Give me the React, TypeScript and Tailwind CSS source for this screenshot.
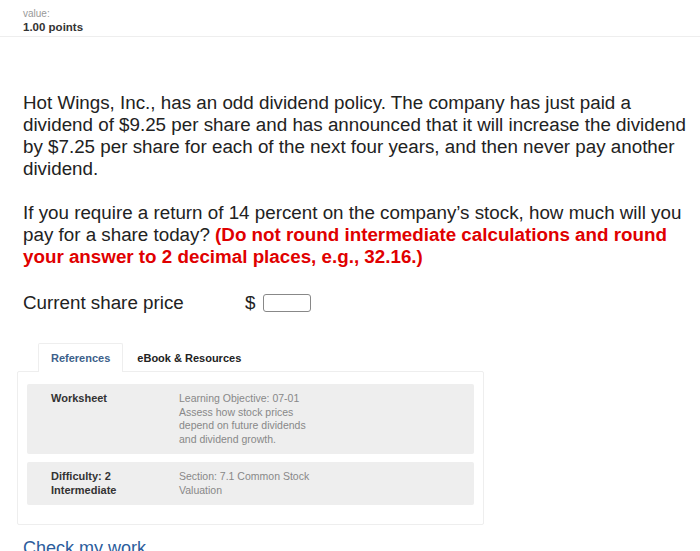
export default function App() {
  return (
    <div className="relative h-[551px] w-[700px] overflow-hidden bg-white text-[#222] [font-family:'Liberation_Sans',Arial,sans-serif]">
      <div className="border-b border-[#eeeeee] px-[23px] pb-[2px] pt-[8px]">
        <p className="text-[10px] leading-[12px] text-[#999]">value:</p>
        <p className="text-[11.5px] font-bold leading-[14px] text-[#333]">1.00 points</p>
      </div>

      <div className="pl-[23px] pr-[10px] pt-[55px] text-[18.8px] leading-[22px] text-[#222]">
        <p>
          Hot Wings, Inc., has an odd dividend policy. The company has just paid a dividend of $9.25 per share and has
          announced that it will increase the dividend by $7.25 per share for each of the next four years, and then never
          pay another dividend.
        </p>
        <p className="mt-[22px]">
          If you require a return of 14 percent on the company’s stock, how much will you pay for a share today?{" "}
          <span className="font-bold text-[#e00000]">
            (Do not round intermediate calculations and round your answer to 2 decimal places, e.g., 32.16.)
          </span>
        </p>
        <div className="mt-[24px] flex items-center">
          <span className="w-[222px]">Current share price</span>
          <span>$</span>
          <span className="ml-[8px] h-[18px] w-[48px] rounded-[3px] border border-[#888]" />
        </div>
      </div>

      <div className="ml-[17px] mt-[29px] w-[467px]">
        <div className="flex items-end pl-[21px] text-[11px] font-bold leading-[14px]">
          <div className="rounded-t-[2px] border border-b-0 border-[#eeeeee] bg-white px-[12px] py-[7px] text-[#3d5f8a]">References</div>
          <div className="px-[14px] py-[7px] text-[#222]">eBook &amp; Resources</div>
        </div>
        <div className="-mt-px rounded-[2px] border border-[#eeeeee] px-[9px] pb-[19px] pt-[12px]">
          <div className="flex rounded-[2px] bg-[#eeeeee] px-[24px] py-[8px] text-[11px] leading-[13.5px]">
            <div className="w-[128px] font-bold text-[#333]">Worksheet</div>
            <div className="text-[10.5px] text-[#888]">
              Learning Objective: 07-01
              <br />
              Assess how stock prices
              <br />
              depend on future dividends
              <br />
              and dividend growth.
            </div>
          </div>
          <div className="mt-[8px] flex rounded-[2px] bg-[#eeeeee] px-[24px] py-[8px] text-[11px] leading-[13.5px]">
            <div className="w-[128px] font-bold text-[#333]">
              Difficulty: 2
              <br />
              Intermediate
            </div>
            <div className="text-[10.5px] text-[#888]">
              Section: 7.1 Common Stock
              <br />
              Valuation
            </div>
          </div>
        </div>
      </div>

      <p className="ml-[23px] mt-[12px] text-[18px] leading-[22px] text-[#2c5d9c]">Check my work</p>
    </div>
  );
}
